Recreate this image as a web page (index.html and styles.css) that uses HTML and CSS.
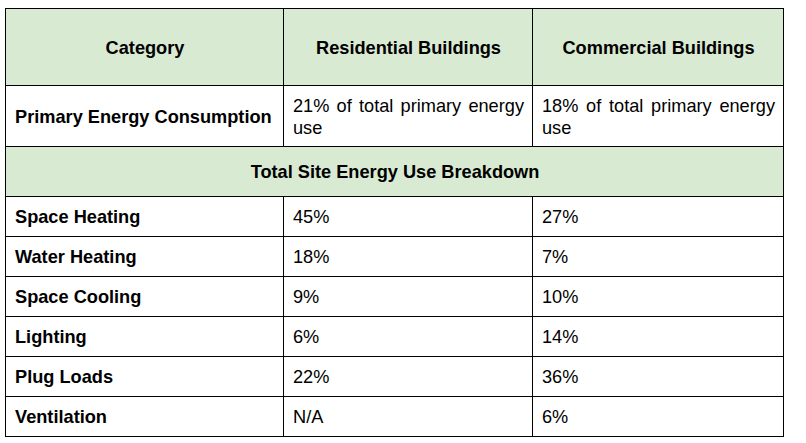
FILE: index.html
```html
<!DOCTYPE html>
<html>
<head>
<meta charset="utf-8">
<link rel="stylesheet" href="styles.css">
</head>
<body>
<table class="energy">
  <colgroup>
    <col class="c1"><col class="c2"><col class="c3">
  </colgroup>
  <tr class="head">
    <th>Category</th>
    <th>Residential Buildings</th>
    <th>Commercial Buildings</th>
  </tr>
  <tr class="primary">
    <td class="label">Primary Energy Consumption</td>
    <td class="just">21% of total primary energy use</td>
    <td class="just">18% of total primary energy use</td>
  </tr>
  <tr class="section">
    <th colspan="3">Total Site Energy Use Breakdown</th>
  </tr>
  <tr class="row"><td class="label">Space Heating</td><td>45%</td><td>27%</td></tr>
  <tr class="row"><td class="label">Water Heating</td><td>18%</td><td>7%</td></tr>
  <tr class="row"><td class="label">Space Cooling</td><td>9%</td><td>10%</td></tr>
  <tr class="row"><td class="label">Lighting</td><td>6%</td><td>14%</td></tr>
  <tr class="row"><td class="label">Plug Loads</td><td>22%</td><td>36%</td></tr>
  <tr class="row"><td class="label">Ventilation</td><td>N/A</td><td>6%</td></tr>
</table>
</body>
</html>
```

FILE: styles.css
```css
html, body {
  margin: 0;
  padding: 0;
  background: #ffffff;
}
body {
  padding: 8px 0 0 5px;
  font-family: "Liberation Sans", Arial, sans-serif;
  font-size: 18.2px;
  color: #000000;
}
.energy {
  border-collapse: collapse;
  table-layout: fixed;
  width: 778px;
}
.c1 { width: 278px; }
.c2 { width: 249px; }
.c3 { width: 251px; }
.energy th,
.energy td {
  border: 1px solid #000000;
  padding: 1px 8px 0 9px;
  vertical-align: middle;
  line-height: 22px;
}
.energy th {
  font-weight: bold;
  text-align: center;
  background: #d9ead3;
}
.head { height: 77px; }
.primary { height: 61px; }
.section { height: 50px; }
.row { height: 40px; }
.label {
  font-weight: bold;
  text-align: left;
}
.just {
  text-align: justify;
}
```
